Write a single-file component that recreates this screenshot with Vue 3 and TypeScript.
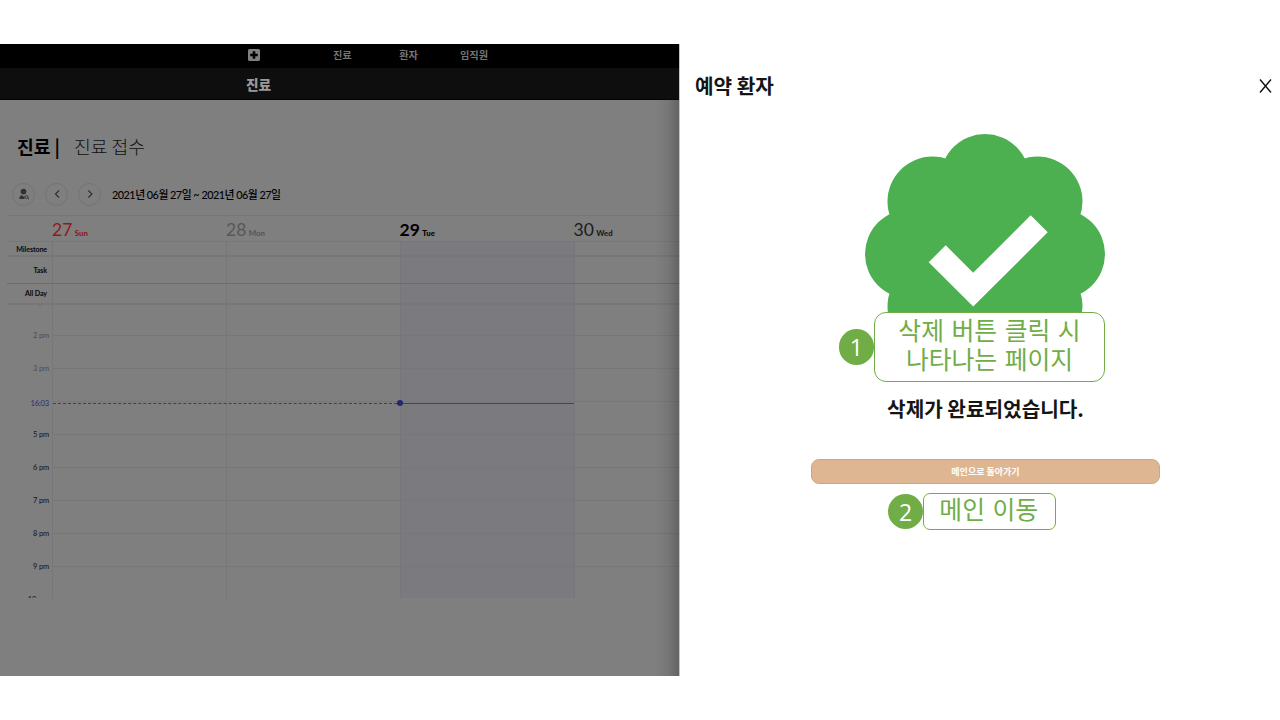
<script setup lang="ts">
interface Day {
  date: string
  name: string
  tone: string
}

interface Hour {
  label: string
  tone: string
}

const menu: string[] = ['진료', '환자', '임직원']

const days: Day[] = [
  { date: '27', name: 'Sun', tone: 'sunday' },
  { date: '28', name: 'Mon', tone: 'past' },
  { date: '29', name: 'Tue', tone: 'today' },
  { date: '30', name: 'Wed', tone: 'coming' },
]

const panels: string[] = ['Milestone', 'Task', 'All Day']

const hours: Hour[] = [
  { label: '1 pm', tone: 'gone' },
  { label: '2 pm', tone: 'gone' },
  { label: '3 pm', tone: 'gone' },
  { label: '16:03', tone: 'now' },
  { label: '5 pm', tone: '' },
  { label: '6 pm', tone: '' },
  { label: '7 pm', tone: '' },
  { label: '8 pm', tone: '' },
  { label: '9 pm', tone: '' },
  { label: '10 pm', tone: '' },
]
</script>

<template>
  <div class="screen">
    <main class="page">
      <nav class="topbar">
        <svg class="logo" viewBox="0 0 12 12" width="12" height="12">
          <path fill="#808080" fill-rule="evenodd" d="M1.5 0h9A1.5 1.5 0 0 1 12 1.5v9a1.5 1.5 0 0 1-1.5 1.5h-9A1.5 1.5 0 0 1 0 10.500v-9A1.500 1.500 0 0 1 1.500 0zM4.700 2.200v2.500H2.200v2.600h2.500v2.500h2.600V7.300h2.500V4.700H7.300V2.200z" />
        </svg>
        <a v-for="item in menu" :key="item" class="menu-item">{{ item }}</a>
      </nav>
      <div class="subbar">진료</div>

      <h1 class="title"><b>진료 |</b><span>진료 접수</span></h1>

      <div class="toolbar">
        <button class="round">
          <svg viewBox="0 0 12 12" width="12" height="12">
            <circle cx="5.500" cy="3.600" r="2.900" fill="#333" />
            <path d="M1.500 11V9.300Q1.500 7.600 3.800 7.300L5.500 8.600 6.500 7.900V11z" fill="#333" />
            <circle cx="8.600" cy="9" r="1.500" fill="none" stroke="#333" stroke-width=".9" />
            <path d="M9.700 10.100l1.300 1.300" stroke="#333" stroke-width="1" />
          </svg>
        </button>
        <button class="round">
          <svg viewBox="0 0 12 12" width="12" height="12"><path d="M8 2.500L4.500 6l3.500 3.500" fill="none" stroke="#303030" stroke-width="1.200" /></svg>
        </button>
        <button class="round">
          <svg viewBox="0 0 12 12" width="12" height="12"><path d="M4.400 2.500L7.900 6 4.400 9.500" fill="none" stroke="#303030" stroke-width="1.200" /></svg>
        </button>
        <span class="range">2021년 06월 27일 ~ 2021년 06월 27일</span>
      </div>

      <section class="calendar">
        <div class="row days">
          <span></span>
          <div v-for="day in days" :key="day.date" class="day" :class="day.tone">
            <span class="date">{{ day.date }}</span><span class="name">{{ day.name }}</span>
          </div>
        </div>
        <div v-for="(panel, i) in panels" :key="panel" class="row panel" :class="'panel-' + i">
          <span class="panel-label">{{ panel }}</span>
          <i v-for="day in days" :key="day.date" class="cell" :class="{ tinted: day.tone === 'today' }"></i>
        </div>
        <div class="hours">
          <div v-for="(hour, i) in hours" :key="hour.label" class="row hour" :class="'hour-' + i">
            <span class="hour-label" :class="hour.tone">{{ hour.label }}</span>
            <i v-for="day in days" :key="day.date" class="cell" :class="{ tinted: day.tone === 'today' }"></i>
          </div>
          <div class="now-line"><i class="before"></i><i class="dot"></i><i class="after"></i></div>
        </div>
      </section>
      <div class="edge"></div>
    </main>

    <aside class="drawer">
      <header class="drawer-head">
        <h2>예약 환자</h2>
        <svg viewBox="0 0 14 16" width="14" height="16"><path d="M1 1.500L12 14.500M12 1.500L1 14.500" stroke="#111" stroke-width="1.400" /></svg>
      </header>

      <div class="result">
        <svg class="badge" viewBox="0 0 242 242" width="242" height="242">
          <g fill="#4caf50">
            <circle cx="121" cy="121" r="88" />
            <circle cx="121" cy="45.500" r="44.500" />
            <circle cx="68.500" cy="68.500" r="45" />
            <circle cx="173.500" cy="68.500" r="45" />
            <circle cx="45.500" cy="121" r="44.500" />
            <circle cx="196.500" cy="121" r="44.500" />
            <circle cx="68.500" cy="173.500" r="45" />
            <circle cx="173.500" cy="173.500" r="45" />
            <circle cx="121" cy="196.500" r="44.500" />
          </g>
          <path d="M64.700 129.300L81.700 112.300 109.200 139.800 166.700 82.300 183.700 99.300 109.200 173.600z" fill="#fff" />
        </svg>
        <div class="note first">
          <span class="num">1</span>
          <div class="bubble">
            <p>삭제 버튼 클릭 시</p>
            <p>나타나는 페이지</p>
          </div>
        </div>
      </div>

      <p class="message">삭제가 완료되었습니다.</p>
      <button class="back">메인으로 돌아가기</button>

      <div class="note second">
        <span class="num">2</span>
        <p class="bubble">메인 이동</p>
      </div>
    </aside>
  </div>
</template>

<style>
body {
  background: #fff;
}
</style>

<style scoped>
* {
  box-sizing: border-box;
}

.screen {
  display: flex;
  width: 1280px;
  height: 720px;
  padding: 44px 0;
  overflow: hidden;
  font-family: Lato, 'Noto Sans CJK KR', sans-serif;
}

h1,
h2,
p {
  margin: 0;
}

.page {
  position: relative;
  width: 679px;
  height: 632px;
  flex: none;
  overflow: hidden;
  background: #7f7f7f;
}

.topbar {
  display: flex;
  align-items: center;
  height: 24px;
  padding-left: 248px;
  background: #000;
  color: #757575;
  font: 700 10.200px/22px 'Noto Sans CJK KR', sans-serif;
}

.logo {
  margin-right: 73px;
  margin-top: -2px;
}

.menu-item {
  margin-top: -2px;
}

.menu-item + .menu-item {
  margin-left: 47.500px;
}

.menu-item:last-child {
  margin-left: 42px;
}

.subbar {
  height: 32px;
  padding-left: 246px;
  border-bottom: 1px solid #050505;
  background: #0e0e0e;
  color: #999;
  font: 900 13.700px/32px 'Noto Sans CJK KR', sans-serif;
}

.title {
  display: flex;
  gap: 14px;
  height: 28px;
  margin: 32px 0 0 17px;
  color: #000;
  font: 300 18.200px/28px 'Noto Sans CJK KR', sans-serif;
}

.title b {
  font-weight: 700;
}

.title span {
  color: #101010;
}

.toolbar {
  display: flex;
  align-items: center;
  height: 24px;
  margin: 22px 0 0 12px;
}

.round {
  display: flex;
  align-items: center;
  justify-content: center;
  width: 23px;
  height: 23px;
  margin-right: 10px;
  padding: 0;
  border: 1px solid #737373;
  border-radius: 50%;
  background: none;
}

.range {
  margin-left: 1px;
  color: #000;
  font-size: 10.800px;
  font-weight: 500;
  letter-spacing: -0.480px;
}

.calendar {
  height: 382px;
  margin: 9px 0 0 7px;
  border-top: 1px solid #777;
}

.row {
  display: grid;
  grid-template-columns: 45px 174px 173.500px 174px 174px;
}

.days {
  height: 25px;
}

.day {
  display: flex;
  align-items: baseline;
  gap: 2.500px;
  line-height: 28px;
}

.date {
  font-size: 17.500px;
}

.name {
  font-size: 7.800px;
  font-weight: 900;
}

.sunday {
  color: #8d1c1c;
}

.past {
  color: #585858;
}

.today {
  color: #000;
}

.today .date {
  font-weight: 700;
}

.coming {
  color: #1c1c1c;
}

.cell {
  border-left: 1px solid #777;
}

.tinted {
  background: rgba(98, 92, 128, 0.14);
}

.panel {
  border-top: 1px solid #777;
}

.panel-0 {
  height: 14px;
}

.panel-1 {
  height: 27.500px;
  border-top: 2px solid #777;
}

.panel-2 {
  height: 20.500px;
  border-top-color: #6c6c6c;
}

.panel-label {
  align-self: center;
  padding: 2px 5px 0 0;
  color: #080808;
  font-size: 7.100px;
  font-weight: 700;
  letter-spacing: -0.100px;
  line-height: 10px;
  text-align: right;
}

.hours {
  position: relative;
  height: 294.500px;
  overflow: hidden;
  border-top: 2px solid #777;
}

.hour {
  height: 33.050px;
}

.hour .cell {
  border-top: 1px solid #777;
}

.hour-0 {
  height: 30px;
}

.hour-0 .cell {
  border-top: 0;
}

.hour-label {
  height: 12px;
  margin-top: -6px;
  padding-right: 3px;
  color: #121212;
  font-size: 7.500px;
  letter-spacing: -0.150px;
  line-height: 14px;
  text-align: right;
}

.hour-0 .hour-label {
  margin-top: -9px;
}

.hour-9 .cell {
  border-top-color: transparent;
}

.hour-9 .hour-label {
  padding-right: 4px;
}

.hour-label.gone {
  color: #4d4d4d;
}

.hour-label.now {
  color: #282b73;
  line-height: 17px;
}

.now-line {
  position: absolute;
  top: 95px;
  left: 46px;
  display: flex;
  align-items: center;
  width: 521px;
  height: 6px;
}

.before {
  width: 344px;
  border-top: 1px dashed #34378a;
}

.dot {
  width: 6px;
  height: 6px;
  border-radius: 50%;
  background: #23276f;
}

.after {
  flex: 1;
  border-top: 1px solid #3b3f85;
}

.edge {
  position: absolute;
  top: 56px;
  right: 0;
  bottom: 0;
  width: 24px;
  background: linear-gradient(to right, rgba(0, 0, 0, 0), rgba(0, 0, 0, 0.070) 55%, rgba(0, 0, 0, 0.220));
}

.drawer {
  display: flex;
  flex: 1;
  flex-direction: column;
  align-items: center;
  border-left: 1px solid #c4c4c4;
  background: #fff;
}

.drawer-head {
  display: flex;
  align-items: center;
  justify-content: space-between;
  width: 100%;
  height: 32px;
  margin-top: 26px;
  padding: 0 7.500px 0 15px;
}

.drawer-head svg {
  margin-top: -1px;
}

h2,
.message {
  color: #151515;
  font: 700 20.200px/33px 'Noto Sans CJK KR', sans-serif;
}

h2 {
  line-height: 32px;
}

.result {
  position: relative;
  width: 242px;
  height: 242px;
  margin: 30.500px 0 0 10px;
}

.badge {
  display: block;
}

.note {
  display: flex;
  align-items: center;
}

.first {
  position: absolute;
  top: 179.500px;
  left: -25.500px;
}

.num {
  width: 35.500px;
  height: 35.500px;
  border-radius: 50%;
  background: #70ad47;
  color: #fff;
  font: 400 23px/37px 'Open Sans', sans-serif;
  text-align: center;
}

.bubble {
  border: 1px solid #70ad47;
  border-radius: 12px;
  background: #fff;
  color: #70ad47;
  font: 400 24.800px/29px 'Noto Sans CJK KR', sans-serif;
  text-align: center;
  white-space: nowrap;
  word-spacing: 2px;
}

.first .bubble {
  width: 231px;
  height: 70px;
  padding: 2px 0 0;
}

.message {
  margin: 17.500px 0 0 11px;
}

.back {
  width: 349px;
  height: 25px;
  margin: 34px 0 0 11px;
  padding: 0;
  border: 1px solid #cda783;
  border-radius: 8px;
  background: #deb692;
  color: #fff;
  font: 700 9px/22px 'Noto Sans CJK KR', sans-serif;
}

.second {
  margin: 9px 16px 0 0;
}

.second .bubble {
  width: 133px;
  height: 37px;
  padding-right: 2px;
  border-radius: 7px;
  line-height: 29px;
}
</style>
